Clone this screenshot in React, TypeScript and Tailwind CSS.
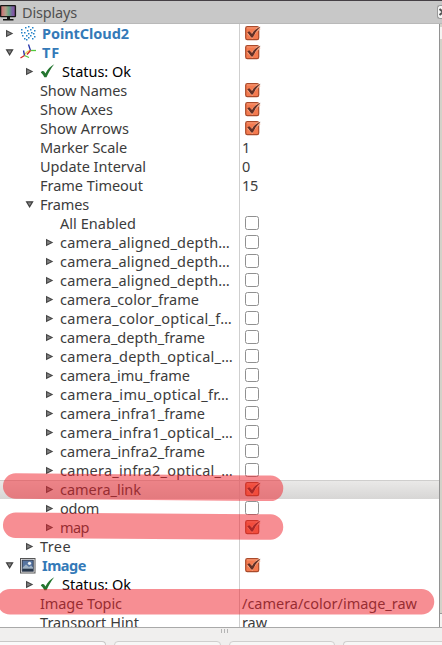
import { useLayoutEffect, useRef } from "react";

type Icon = "cloud" | "tf" | "check" | "image";
type Row = {
  text: string;
  w: number;
  level: number;
  arrow?: "right" | "down";
  icon?: Icon;
  checked?: boolean;
  value?: string;
  valueW?: number;
  title?: boolean;
  status?: boolean;
  selected?: boolean;
};

const rows: Row[] = [
  { text: "PointCloud2", w: 87, level: 0, arrow: "right", icon: "cloud", title: true, checked: true },
  { text: "TF", w: 18, level: 0, arrow: "down", icon: "tf", title: true, checked: true },
  { text: "Status: Ok", w: 69, level: 1, arrow: "right", icon: "check", status: true },
  { text: "Show Names", w: 87, level: 1, checked: true },
  { text: "Show Axes", w: 73, level: 1, checked: true },
  { text: "Show Arrows", w: 89, level: 1, checked: true },
  { text: "Marker Scale", w: 87, level: 1, value: "1", valueW: 8 },
  { text: "Update Interval", w: 106, level: 1, value: "0", valueW: 8 },
  { text: "Frame Timeout", w: 103, level: 1, value: "15", valueW: 16 },
  { text: "Frames", w: 49, level: 1, arrow: "down" },
  { text: "All Enabled", w: 76, level: 2, checked: false },
  { text: "camera_aligned_depth…", w: 170, level: 2, arrow: "right", checked: false },
  { text: "camera_aligned_depth…", w: 170, level: 2, arrow: "right", checked: false },
  { text: "camera_aligned_depth…", w: 170, level: 2, arrow: "right", checked: false },
  { text: "camera_color_frame", w: 139, level: 2, arrow: "right", checked: false },
  { text: "camera_color_optical_f…", w: 172, level: 2, arrow: "right", checked: false },
  { text: "camera_depth_frame", w: 145, level: 2, arrow: "right", checked: false },
  { text: "camera_depth_optical_…", w: 173, level: 2, arrow: "right", checked: false },
  { text: "camera_imu_frame", w: 130, level: 2, arrow: "right", checked: false },
  { text: "camera_imu_optical_fr…", w: 169, level: 2, arrow: "right", checked: false },
  { text: "camera_infra1_frame", w: 145, level: 2, arrow: "right", checked: false },
  { text: "camera_infra1_optical_…", w: 173, level: 2, arrow: "right", checked: false },
  { text: "camera_infra2_frame", w: 145, level: 2, arrow: "right", checked: false },
  { text: "camera_infra2_optical_…", w: 173, level: 2, arrow: "right", checked: false },
  { text: "camera_link", w: 81, level: 2, arrow: "right", checked: true, selected: true },
  { text: "odom", w: 39, level: 2, arrow: "right", checked: false },
  { text: "map", w: 29, level: 2, arrow: "right", checked: true },
  { text: "Tree", w: 31, level: 1, arrow: "right" },
  { text: "Image", w: 44, level: 0, arrow: "down", icon: "image", title: true, checked: true },
  { text: "Status: Ok", w: 69, level: 1, arrow: "right", icon: "check", status: true },
  { text: "Image Topic", w: 82, level: 1, value: "/camera/color/image_raw", valueW: 175 },
  { text: "Transport Hint", w: 99, level: 1, value: "raw", valueW: 25 },
];

const indents = ["w-[2px]", "w-[22px]", "w-[42px]"];

// Spaces the letters so that a label takes exactly the given width.
function Label({ text, width, className = "" }: { text: string; width: number; className?: string }) {
  const ref = useRef<HTMLSpanElement>(null);
  useLayoutEffect(() => {
    const el = ref.current;
    if (!el) return;
    el.style.letterSpacing = "0px";
    const natural = el.getBoundingClientRect().width;
    el.style.letterSpacing = `${(width - natural) / text.length}px`;
  }, [text, width]);
  return (
    <span ref={ref} className={`shrink-0 whitespace-pre ${className}`}>
      {text}
    </span>
  );
}

function Arrow({ dir }: { dir?: "right" | "down" }) {
  return (
    <svg width="14" height="19" viewBox="0 0 14 19" className="shrink-0">
      {dir === "right" && <path d="M4.6 6.7 L10 9.5 L4.6 12.3 Z" fill="#858585" stroke="#484848" strokeWidth="1.2" />}
      {dir === "down" && <path d="M4.6 6.8 H10.6 L7.6 11.8 Z" fill="#858585" stroke="#404040" strokeWidth="1.2" />}
    </svg>
  );
}

const dots = [
  [8, 2], [5, 3], [12, 3], [1, 5], [7, 6], [10, 5], [14, 6], [1, 8], [4, 8], [11, 8], [8, 9],
  [13, 9], [2, 11], [6, 11], [10, 11], [14, 12], [4, 14], [8, 13], [12, 14], [6, 15],
];

function RowIcon({ kind }: { kind: Icon }) {
  return (
    <svg width="16" height="19" viewBox="0 0 16 19" className="shrink-0">
      {kind === "cloud" &&
        dots.map(([x, y]) => <rect key={`${x}-${y}`} x={x} y={y} width="1.5" height="1.5" fill="#2583c7" />)}
      {kind === "tf" && (
        <g fill="none" strokeWidth="1.3">
          <path d="M4.5 11.5 L7.5 8.5 L10 7.5" stroke="#e8d64a" />
          <path d="M8.5 1.5 L10.5 7.5" stroke="#2331a8" />
          <path d="M10.5 7.5 H16" stroke="#54c83c" />
          <path d="M10.5 7.5 L7 11.5" stroke="#d32626" />
          <path d="M3.5 7.5 L4.5 12.5" stroke="#2331a8" />
          <path d="M4.5 12.5 L9 14.5" stroke="#54c83c" />
          <path d="M4.5 12.5 L0.5 15" stroke="#d32626" />
        </g>
      )}
      {kind === "check" && (
        <path
          d="M0.8 10.5 C2 8.7 3.5 8.6 4.4 9.8 L5.4 11.4 C7.6 7.4 10.4 4.2 14.2 2.2 C11 6.3 8.7 10.6 6.5 15.2 H4.3 C3.3 13.4 2.3 11.6 0.8 10.5 Z"
          fill="#24752f"
        />
      )}
      {kind === "image" && (
        <>
          <rect x="0.5" y="2.5" width="14.5" height="14.5" fill="#f7f7f7" stroke="#555" />
          <rect x="2.2" y="4.2" width="11" height="11" fill="#5674a0" stroke="#303a4c" />
          <path d="M2.7 11.5 L6 8.5 L9 11 L11 9.5 L13 11.5 V13 H2.7 Z" fill="#9fb2c4" />
          <circle cx="9.5" cy="7.3" r="1.6" fill="#eef3f7" />
          <path d="M2.7 12.7 H13 V15 H2.7 Z" fill="#28374b" />
        </>
      )}
    </svg>
  );
}

function CheckBox({ on }: { on: boolean }) {
  return (
    <svg width="18" height="19" viewBox="0 0 18 19" className="ml-[4px] shrink-0">
      {on ? (
        <>
          <rect x="1.7" y="2.7" width="13" height="13" rx="1.6" fill="#f47b50" stroke="#a94a2b" strokeWidth="1.2" />
          <path d="M2.8 3.9 H13.6" stroke="#fa9d78" strokeWidth="1" />
          <path d="M4.2 8.7 L7.9 12.4 C9.6 8.7 12 5.8 15.8 3.9" fill="none" stroke="#f9b292" strokeWidth="3" />
          <path d="M3.3 8.3 L5.3 7.2 L8 9.9 C9.8 6.8 12.6 4.3 16.7 2.8 C13 6 10.8 9.2 8.8 13.4 H7.3 Z" fill="#633026" />
        </>
      ) : (
        <rect x="1.5" y="2.5" width="13" height="13" rx="2" fill="#fff" stroke="#909090" />
      )}
    </svg>
  );
}

function TreeRow({ row }: { row: Row }) {
  const color = row.title ? "text-[#347ab8] font-bold" : row.status ? "text-black" : "text-[#3c3c3c]";
  return (
    <div
      className={`flex h-[19px] shrink-0 ${
        row.selected ? "bg-linear-to-b from-[#ebeae9] to-[#d7d6d5] shadow-[inset_0_1px_0_#cfcecd]" : ""
      }`}
    >
      <div className="flex w-[240px] shrink-0 border-r border-[#cfcfcf]">
        <div className={`${indents[row.level]} shrink-0`} />
        <Arrow dir={row.arrow} />
        <div className="w-[4px] shrink-0" />
        {row.icon && (
          <div className="flex w-[22px] shrink-0">
            <RowIcon kind={row.icon} />
          </div>
        )}
        <Label text={row.text} width={row.w} className={color} />
      </div>
      {row.checked !== undefined && <CheckBox on={row.checked} />}
      {row.value && <Label text={row.value} width={row.valueW ?? 0} className="ml-[2px] text-[#3c3c3c]" />}
    </div>
  );
}

export default function App() {
  return (
    <div className="relative flex h-[645px] w-[442px] flex-col overflow-hidden bg-[#f0efee] font-['Noto_Sans','Open_Sans',sans-serif] text-[14.5px] leading-[18px]">
      <div className="flex h-[24px] shrink-0 items-start border-t border-b border-t-[#454045] border-b-[#b9b9b9] bg-[#c8c8c8]">
        <svg width="17" height="22" viewBox="0 0 17 22" className="shrink-0">
          <defs>
            <linearGradient id="screen">
              <stop offset="0" stopColor="#d36872" />
              <stop offset="0.35" stopColor="#aea08a" />
              <stop offset="0.55" stopColor="#68a383" />
              <stop offset="0.8" stopColor="#7a62a5" />
              <stop offset="1" stopColor="#8c4b9d" />
            </linearGradient>
          </defs>
          <rect x="0.6" y="4.6" width="14.8" height="11" rx="0.6" fill="url(#screen)" stroke="#171717" strokeWidth="1.4" />
          <path d="M7 16 H10 V18 H13.5 V19.5 H3 V18 H7 Z" fill="#171717" />
        </svg>
        <Label text="Displays" width={55} className="ml-[5px] mt-[2px] text-[#505050]" />
        <div className="ml-auto mt-[4px] flex h-[14px] w-[5px] shrink-0 items-center overflow-hidden rounded-l-[3px] border border-r-0 border-[#999] bg-[#f5f5f5]">
          <svg width="5" height="10" viewBox="0 0 5 10" className="shrink-0">
            <path d="M1.5 2 L5 5 L1.5 8" fill="none" stroke="#555" strokeWidth="2" />
          </svg>
        </div>
      </div>
      <div className="flex h-[604px] shrink-0 border-b border-[#a9a9a9]">
        <div className="flex w-[439px] shrink-0 flex-col overflow-hidden bg-white">
          {rows.map((row, i) => (
            <TreeRow key={i} row={row} />
          ))}
        </div>
        <div className="flex w-[3px] flex-col border-l border-[#929292] bg-[#d3d2c9]">
          <div className="mt-[3px] h-[12px] bg-[#f4f4f2]" />
          <div className="mt-auto h-[14px] border-t border-[#999] bg-[#f4f4f2]" />
        </div>
      </div>
      <div className="flex h-[13px] shrink-0 justify-center gap-[2px] pt-[1px] pl-[6px]">
        <div className="h-[4px] w-px bg-[#b4b4b4]" />
        <div className="h-[4px] w-px bg-[#b4b4b4]" />
        <div className="h-[4px] w-px bg-[#b4b4b4]" />
      </div>
      <div className="flex h-[4px] shrink-0 gap-[8px] overflow-hidden">
        <div className="h-[8px] w-[106px] shrink-0 rounded-tr-[4px] border-t border-r border-[#c9c8c7] bg-[#fafafa]" />
        <div className="h-[8px] w-[107px] shrink-0 rounded-t-[4px] border border-[#d0cfce] bg-[#f7f7f6]" />
        <div className="h-[8px] w-[106px] shrink-0 rounded-t-[4px] border border-[#d0cfce] bg-[#f7f7f6]" />
        <div className="h-[8px] w-[100px] shrink-0 rounded-tl-[4px] border-t border-l border-[#d0cfce] bg-[#f7f7f6]" />
      </div>
      <svg width="442" height="645" className="pointer-events-none absolute inset-0">
        <g stroke="#f01e28" strokeOpacity="0.5" strokeWidth="25.5" strokeLinecap="round">
          <path d="M15.7 486 L270.5 488.3" />
          <path d="M15.7 525.2 L270.5 527" />
          <path d="M10 601.7 L421.5 601.8" />
        </g>
      </svg>
    </div>
  );
}
